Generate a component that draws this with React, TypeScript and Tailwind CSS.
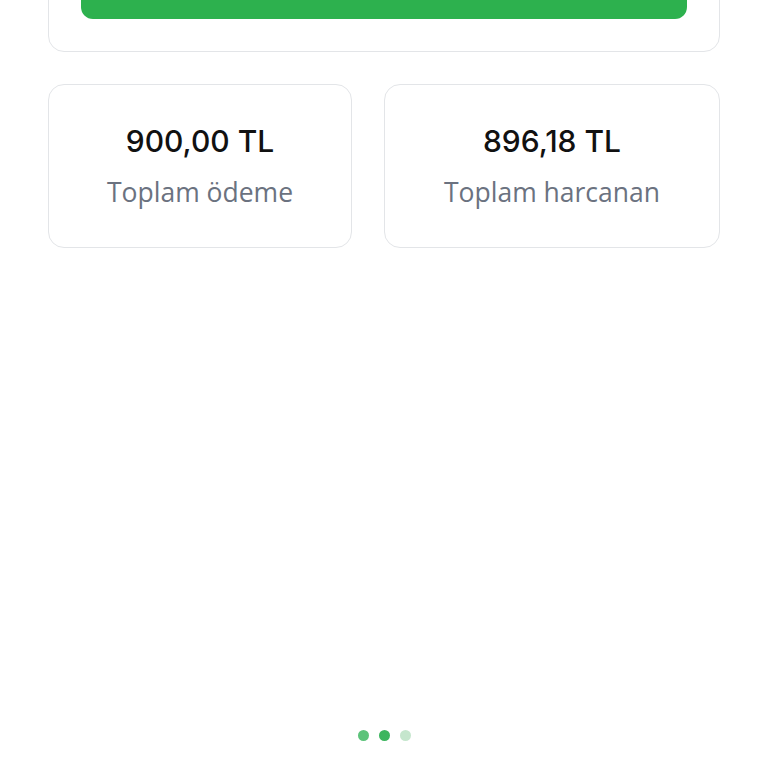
import React from "react";

export default function App() {
  return (
    <div className="h-[768px] w-[768px] overflow-hidden bg-white flex flex-col px-12" style={{ fontFamily: "'Open Sans', Roboto, sans-serif" }}>
      <div className="-mt-[70px] rounded-2xl border border-[#e3e5e8] p-8">
        <div className="h-14 rounded-xl bg-[#2db14e]" />
      </div>
      <div className="mt-8 flex gap-8">
        <div className="w-[304px] h-[164px] rounded-2xl border border-[#e3e5e8] flex flex-col items-center justify-center">
          <div className="text-[30px] font-medium text-[#111111] leading-none [font-family:Inter,sans-serif]">900,00 TL</div>
          <div className="mt-[23px] text-[26.5px] text-[#6b7280] leading-none">Toplam ödeme</div>
        </div>
        <div className="flex-1 h-[164px] rounded-2xl border border-[#e3e5e8] flex flex-col items-center justify-center">
          <div className="text-[30px] font-medium text-[#111111] leading-none [font-family:Inter,sans-serif]">896,18 TL</div>
          <div className="mt-[23px] text-[26.5px] text-[#6b7280] leading-none">Toplam harcanan</div>
        </div>
      </div>
      <div className="mt-auto mb-[27px] flex justify-center gap-[10px]">
        <div className="h-[11px] w-[11px] rounded-full bg-[#5cc37a]" />
        <div className="h-[11px] w-[11px] rounded-full bg-[#3cb55e]" />
        <div className="h-[11px] w-[11px] rounded-full bg-[#c5e6cd]" />
      </div>
    </div>
  );
}
